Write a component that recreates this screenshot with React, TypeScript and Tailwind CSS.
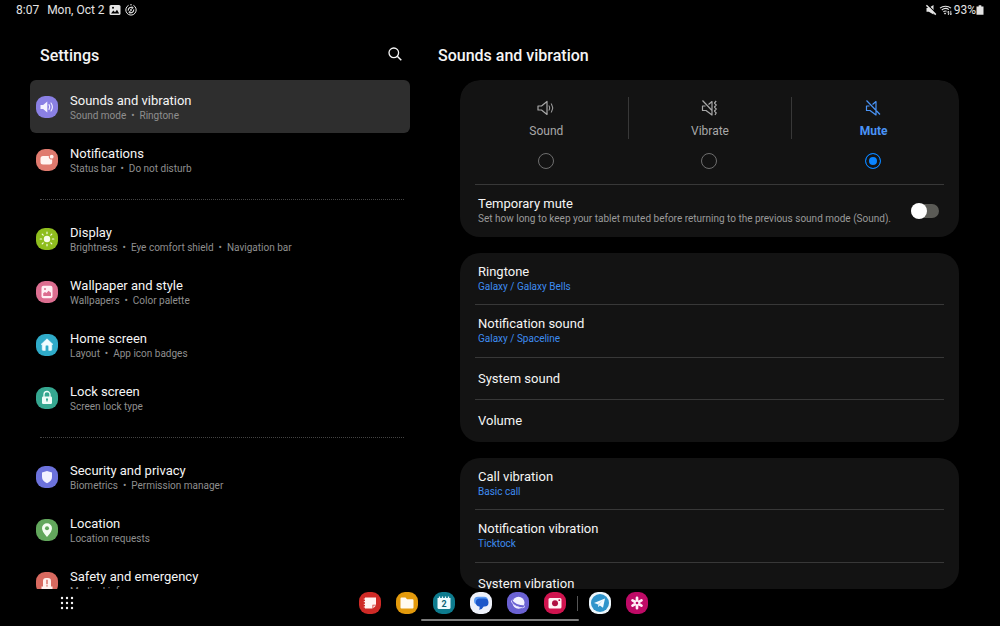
import type { ReactNode } from "react";

export default function App() {
  return (
    <div className="flex h-screen flex-col overflow-hidden bg-black font-['Roboto',sans-serif] text-[#f5f5f5]">
      <StatusBar />
      <main className="flex min-h-0 flex-1">
        <Sidebar />
        <SoundSettings />
      </main>
      <Taskbar />
    </div>
  );
}

function StatusBar() {
  return (
    <header className="flex h-5 shrink-0 items-center px-4 text-[12px] text-[#e4e4e4]">
      <span>8:07</span>
      <span className="ml-2">Mon, Oct 2</span>
      <svg viewBox="0 0 12 12" className="ml-1 size-3">
        <rect x="0.5" y="1" width="11" height="10" rx="1.5" fill="#e4e4e4" />
        <path d="M2 9.5 4.3 6.5 6 8.2 8 5.8 10.2 9.5Z" fill="#000" />
        <circle cx="4" cy="3.8" r="1" fill="#000" />
      </svg>
      <svg viewBox="0 0 12 12" className="ml-1 size-3" fill="none" stroke="#e4e4e4">
        <path d="M3.6 1.3A5.2 5.2 0 1 0 8.4 1.3M5.2 0.8h1.6" strokeWidth="1" />
        <path d="M3.3 6.6A2.8 2.8 0 0 1 7.6 3.8M8.7 5.4A2.8 2.8 0 0 1 4.4 8.2" strokeWidth="1.1" />
        <path d="M7 2.4 8.200 4 6.400 4.800M5 9.600 3.800 8 5.600 7.200" strokeWidth="0.9" />
        <circle cx="6" cy="6" r="0.9" fill="#e4e4e4" stroke="none" />
      </svg>
      <div className="ml-auto flex items-center">
        <svg viewBox="0 0 12 12" className="size-3" fill="#e4e4e4">
          <path d="M1.5 4h2.300L8.500 1v9.500L3.800 7.800H1.500Z" />
          <path d="M2.200 0.400 11.800 10" stroke="#000" strokeWidth="1.200" />
          <path d="M1.400 1.200 10.800 10.600" stroke="#e4e4e4" strokeWidth="1.500" />
        </svg>
        <svg viewBox="0 0 13 12" className="mx-0.5 h-3 w-[13px]" fill="none" stroke="#e4e4e4">
          <path d="M1 4.2C4 1.6 9 1.6 12 4.2M2.8 6C5 4.2 8 4.2 9.8 5.6M4.4 7.8C5.4 7 6.6 6.9 7.6 7.3" strokeWidth="1.1" />
          <path d="M6 8.5 7.2 9.6 6 10.6 4.9 9.6Z" fill="#e4e4e4" stroke="none" />
          <path d="M9.4 11V7.4M8.2 8.5 9.4 7.2 10.2 8.2M11.8 6.8v3.8M10.9 9.5l.9 1.3.9-1.3" strokeWidth="0.9" />
        </svg>
        <span>93%</span>
        <svg viewBox="0 0 8 12" className="h-3 w-2" fill="#e4e4e4">
          <path d="M2.7 1.200h2.600v1.200H7.500v8.400H0.500V2.400h2.200Z" />
        </svg>
      </div>
    </header>
  );
}

function Sidebar() {
  return (
    <nav aria-label="Settings" className="flex w-[41%] flex-col overflow-hidden pl-[30px]">
      <div className="flex h-[60px] shrink-0 items-center justify-between pt-3 pr-2 pl-[10px]">
        <h1 className="text-[16px] font-medium">Settings</h1>
        <button type="button" aria-label="Search" className="-mt-1">
          <svg viewBox="0 0 14 14" className="size-[14px]" fill="none" stroke="#f5f5f5" strokeWidth="1.3">
            <circle cx="5.8" cy="5.8" r="4.8" />
            <path d="M9.3 9.3 13.3 13.3" strokeWidth="1.5" />
          </svg>
        </button>
      </div>
      <NavItem active title="Sounds and vibration" details={["Sound mode", "Ringtone"]} color="bg-[#8a80e4]">
        <path d="M4.5 9h2.6L11.3 5.5v11L7.1 13H4.5Z" fill="#f4f2ff" />
        <path d="M13 8.6q1.5 2.4 0 4.8M15 7q2.8 4 0 8" fill="none" stroke="#f4f2ff" strokeWidth="1.1" strokeLinecap="round" />
      </NavItem>
      <NavItem title="Notifications" details={["Status bar", "Do not disturb"]} color="bg-[#e07a6e]">
        <path d="M7 7h5.800a2.900 2.900 0 0 0 3.400 3.500V13a2.500 2.500 0 0 1-2.500 2.500H7A2.500 2.500 0 0 1 4.500 13V9.500A2.500 2.500 0 0 1 7 7Z" fill="#fff3f0" />
        <circle cx="15.700" cy="7.700" r="1.900" fill="#fff3f0" />
      </NavItem>
      <NavDivider />
      <NavItem title="Display" details={["Brightness", "Eye comfort shield", "Navigation bar"]} color="bg-[#8fbe1e]">
        <circle cx="11" cy="11" r="3.200" fill="#f7fdea" />
        <path
          d="M11 4.200v1.400M11 16.400v1.400M4.200 11h1.400M16.400 11h1.400M6.200 6.200l1 1M14.800 14.800l1 1M15.800 6.200l-1 1M7.200 14.800l-1 1"
          stroke="#f7fdea"
          strokeWidth="1.200"
          strokeLinecap="round"
        />
      </NavItem>
      <NavItem title="Wallpaper and style" details={["Wallpapers", "Color palette"]} color="bg-[#dc6e90]">
        <rect x="5.500" y="4.800" width="11" height="12.400" rx="2" fill="#fff0f4" />
        <path d="M7.200 12.200 9 11l1.500 1 2-2.300 2.500 2v3.300H7.200Z" fill="#dc6e90" />
        <circle cx="9" cy="8" r="1" fill="#dc6e90" />
      </NavItem>
      <NavItem title="Home screen" details={["Layout", "App icon badges"]} color="bg-[#2fabc9]">
        <path d="M11 4.800 17 10.400h-1.200V15.500q0 1-1 1H12.700V12.700a1.700 1.700 0 0 0-3.400 0v3.800H7.200q-1 0-1-1V10.400H5Z" fill="#f0fcff" stroke="#f0fcff" strokeWidth="0.500" strokeLinejoin="round" />
      </NavItem>
      <NavItem title="Lock screen" details={["Screen lock type"]} color="bg-[#35a790]">
        <path d="M8 10V7.500a3 3 0 0 1 6 0V10" fill="none" stroke="#effcf8" strokeWidth="1.300" />
        <rect x="6" y="9.500" width="10" height="7.500" rx="1.300" fill="#effcf8" />
        <path d="M11 12v2.600" stroke="#35a790" strokeWidth="1.300" />
        <circle cx="11" cy="12.200" r="1" fill="#35a790" />
      </NavItem>
      <NavDivider />
      <NavItem title="Security and privacy" details={["Biometrics", "Permission manager"]} color="bg-[#6c72dc]">
        <path d="M11 4.900 16 6.500V11q0 4-5 6.300Q6 15 6 11V6.500Z" fill="#f1f1ff" />
      </NavItem>
      <NavItem title="Location" details={["Location requests"]} color="bg-[#62a75c]">
        <path d="M11 4.200a5 5 0 0 1 5 5q0 3.500-5 8.700-5-5.200-5-8.700a5 5 0 0 1 5-5Z" fill="#f3fcf1" />
        <circle cx="11" cy="9.200" r="2" fill="#62a75c" />
      </NavItem>
      <NavItem title="Safety and emergency" details={["Medical info"]} color="bg-[#d8695f]">
        <path d="M7 14.500V9a3 3 0 0 1 3-3h2a3 3 0 0 1 3 3v5.500h1.500V17h-11v-2.500Z" fill="#fff1ee" />
        <path d="M11 7.800v4.400M11 13.300v1.300" stroke="#d8695f" strokeWidth="1.400" />
      </NavItem>
    </nav>
  );
}

type NavItemProps = {
  title: string;
  details: string[];
  color: string;
  active?: boolean;
  children: ReactNode;
};

function NavItem({ title, details, color, active, children }: NavItemProps) {
  return (
    <a
      href="#"
      aria-current={active ? "page" : undefined}
      className={`flex h-[53px] shrink-0 items-center gap-3 rounded-md pl-1.5 ${active ? "bg-[#2e2e2e]" : ""}`}
    >
      <svg viewBox="0 0 22 22" className={`size-[22px] shrink-0 rounded-[9px] ${color}`}>
        {children}
      </svg>
      <div className="pt-[3px]">
        <p className="text-[13px] leading-4">{title}</p>
        <p className="text-[10px] leading-[14px] whitespace-pre text-[#8f8f8f]">{details.join("  •  ")}</p>
      </div>
    </a>
  );
}

function NavDivider() {
  return (
    <div className="flex h-[26px] shrink-0 items-center pr-1.5 pl-[10px]">
      <hr className="w-full border-t border-dotted border-[#444444]" />
    </div>
  );
}

function SoundSettings() {
  return (
    <section className="flex flex-1 flex-col pr-[41px] pl-[28px]">
      <div className="flex h-[60px] shrink-0 items-center pt-3">
        <h2 className="text-[16px] font-medium">Sounds and vibration</h2>
      </div>
      <div className="ml-[22px] flex min-h-0 flex-1 flex-col gap-4 overflow-hidden rounded-[20px]">
        <Card>
          <div>
            <div role="radiogroup" aria-label="Sound mode" className="-mx-[11px] grid grid-cols-3 pt-[17px] pb-[15px]">
              <SoundMode label="Sound">
                <path d="M1 7h3.500L10 2.500v13L4.500 11H1Z" />
                <path d="M12 6.500q1.500 2.500 0 5M14.300 4.500q3 4.500 0 9" strokeWidth="1" />
              </SoundMode>
              <SoundMode label="Vibrate">
                <path d="M4.500 7H1.500v4.500H5L11 16V2.500L7.500 5.500M1.500 1.500 11 11.500" />
                <path d="M15.200 2 13.500 4l1.700 2-1.700 2 1.700 2-1.700 2 1.700 2-1.200 1.800" />
              </SoundMode>
              <SoundMode label="Mute" checked>
                <path d="M4.500 7H1.500v4.500H5L11 16V2.500L7.500 5.500M1.500 1.500 15 15.500" />
              </SoundMode>
            </div>
          </div>
          <div className="flex h-[52px] items-center justify-between pr-[5px] pl-[3px]">
            <label htmlFor="temporary-mute">
              <span className="block text-[13px] leading-4">Temporary mute</span>
              <span className="block text-[10px] leading-[14px] text-[#9a9a9a]">
                Set how long to keep your tablet muted before returning to the previous sound mode (Sound).
              </span>
            </label>
            <input
              id="temporary-mute"
              type="checkbox"
              role="switch"
              className="flex h-[14px] w-7 shrink-0 appearance-none items-center rounded-full bg-[#5b5b56] before:size-4 before:shrink-0 before:rounded-full before:bg-white checked:justify-end checked:bg-[#0a84ff]"
            />
          </div>
        </Card>
        <Card>
          <SettingRow title="Ringtone" value="Galaxy / Galaxy Bells" />
          <SettingRow title="Notification sound" value="Galaxy / Spaceline" />
          <SettingRow title="System sound" />
          <SettingRow title="Volume" />
        </Card>
        <Card>
          <SettingRow title="Call vibration" value="Basic call" />
          <SettingRow title="Notification vibration" value="Ticktock" />
          <SettingRow title="System vibration" />
        </Card>
      </div>
    </section>
  );
}

function Card({ children }: { children: ReactNode }) {
  return (
    <div className="shrink-0 divide-y divide-[#383838] rounded-[20px] bg-[#131313] px-[15px]">{children}</div>
  );
}

type SoundModeProps = {
  label: string;
  checked?: boolean;
  children: ReactNode;
};

function SoundMode({ label, checked, children }: SoundModeProps) {
  return (
    <label className="group flex flex-col items-center text-[#a8a8a8] has-checked:font-bold has-checked:text-[#4a94f7]">
      <span className="flex h-[42px] w-full flex-col items-center gap-1.5 border-l border-[#383838] pt-[2px] group-first-of-type:border-transparent">
        <svg viewBox="0 0 18 18" className="size-[18px]" fill="none" stroke="currentColor" strokeWidth="1.200" strokeLinejoin="round">
          {children}
        </svg>
        <span className="text-[12px] leading-4">{label}</span>
      </span>
      <input
        type="radio"
        name="sound-mode"
        defaultChecked={checked}
        className="mt-[14px] size-4 appearance-none rounded-full border border-[#6e6e6e] checked:border-[#0a84ff] checked:bg-[#0a84ff] checked:shadow-[inset_0_0_0_3px_#131313]"
      />
    </label>
  );
}

function SettingRow({ title, value }: { title: string; value?: string }) {
  return (
    <button
      type="button"
      className={`flex w-full flex-col justify-center pl-[3px] text-left ${value ? "h-[53px] first:h-[52px]" : "h-[42px]"}`}
    >
      <span className="text-[13px] leading-4">{title}</span>
      {value && <span className="text-[10px] leading-[14px] text-[#3e8cf0]">{value}</span>}
    </button>
  );
}

function Taskbar() {
  return (
    <footer className="flex h-[37px] shrink-0 flex-col items-center">
      <div className="grid w-full grid-cols-[1fr_auto_1fr] items-center pt-[3px]">
        <button type="button" aria-label="All apps" className="ml-[60px] size-[14px]">
          <svg viewBox="0 0 14 14" fill="#f5f5f5">
            {[2, 7, 12].map((y) => [2, 7, 12].map((x) => <circle key={`${x}-${y}`} cx={x} cy={y} r="1.200" />))}
          </svg>
        </button>
        <div className="flex items-center gap-[15px] pl-[7px]">
          <AppIcon name="Notes" color="bg-[#cf2a26]">
            <path d="M6 5.500H17v7.300h-3.500V16.500H6Z" fill="#fff4f2" />
            <path d="M14.300 13.600H17l-2.700 2.700Z" fill="#fff4f2" />
            <path d="M4.800 7h2.500M4.800 9.700h2.500M4.800 12.300h2.500M4.800 15h2.500" stroke="#fff4f2" />
          </AppIcon>
          <AppIcon name="My Files" color="bg-[#e39a0c]">
            <path d="M5.500 5.500h4l1.500 1.700h5.500q1 0 1 1V15.500q0 1-1 1h-11q-1 0-1-1V6.500q0-1 1-1Z" fill="#fffaf0" />
          </AppIcon>
          <AppIcon name="Calendar" color="bg-[#0d7b8e]">
            <path d="M4.500 6h13V15.500q0 1.500-1.500 1.500H6Q4.500 17 4.500 15.500Z" fill="#f0fcff" />
            <path d="M6.500 4.500v2.500M9.500 4.500v2.500M12.500 4.500v2.500M15.500 4.500v2.500" stroke="#f0fcff" strokeWidth="1.300" />
            <text x="11" y="14.500" textAnchor="middle" fontSize="9" fontWeight="700" fill="#0d6578">
              2
            </text>
          </AppIcon>
          <AppIcon name="Messages" color="bg-[#eef1fa]">
            <path d="M8 4.800h6a4 4 0 0 1 0 8H8a4 4 0 0 1 0-8Z" fill="#5b9bf5" />
            <path d="M9 6.500h5.500a4 4 0 0 1 0 8h-.8Q12.500 17.300 9 17.800q1-1.500.5-3.400A4 4 0 0 1 9 6.500Z" fill="#1d57c9" />
          </AppIcon>
          <AppIcon name="Internet" color="bg-[#6a61d2]">
            <circle cx="11.500" cy="10.800" r="6" fill="#f3f2ff" />
            <path d="M4.500 8.500q3 6 13.500 6" fill="none" stroke="#6a61d2" strokeWidth="2" />
            <path d="M5.500 8Q3.200 8.500 5.200 11 9 15.500 15.500 15.800q3-.2 1.700-2.300" fill="none" stroke="#d9d6ff" strokeWidth="0.900" />
          </AppIcon>
          <AppIcon name="Camera" color="bg-[#d0144f]">
            <rect x="4.500" y="6" width="13" height="10.500" rx="1.500" fill="#fff2f5" />
            <circle cx="11" cy="11.300" r="3" fill="#b00f42" />
            <circle cx="15.300" cy="8.200" r="0.900" fill="#b00f42" />
          </AppIcon>
          <div className="-mx-1 h-[15px] w-px bg-[#555555]" />
          <AppIcon name="Telegram" color="bg-[#eef7fc]">
            <circle cx="11" cy="11" r="9" fill="#2f94cb" />
            <path d="M5 11 16 6.500 14 15.800 10.800 13.400 9.300 15 8.800 12.200Z" fill="#f3faff" />
            <path d="M8.800 12.200 13.700 8.600 10 12.800 9.300 15Z" fill="#b9dcef" />
          </AppIcon>
          <AppIcon name="Gallery" color="bg-[#bf0a66]">
            <path
              d="M11 9.500V5.800M11 12.500V16.200M9.700 10.200 6.500 8.400M12.300 11.800l3.200 1.800M12.300 10.200l3.200-1.800M9.700 11.800l-3.200 1.800"
              stroke="#fff0f7"
              strokeWidth="2.700"
              strokeLinecap="round"
            />
            <circle cx="11" cy="11" r="1.300" fill="#bf0a66" />
          </AppIcon>
        </div>
      </div>
      <div className="mt-[5px] h-[2px] w-[158px] rounded-full bg-[#7d7d7d]" />
    </footer>
  );
}

function AppIcon({ name, color, children }: { name: string; color: string; children: ReactNode }) {
  return (
    <button type="button" aria-label={name} className={`size-[22px] overflow-hidden rounded-[9px] ${color}`}>
      <svg viewBox="0 0 22 22">{children}</svg>
    </button>
  );
}
